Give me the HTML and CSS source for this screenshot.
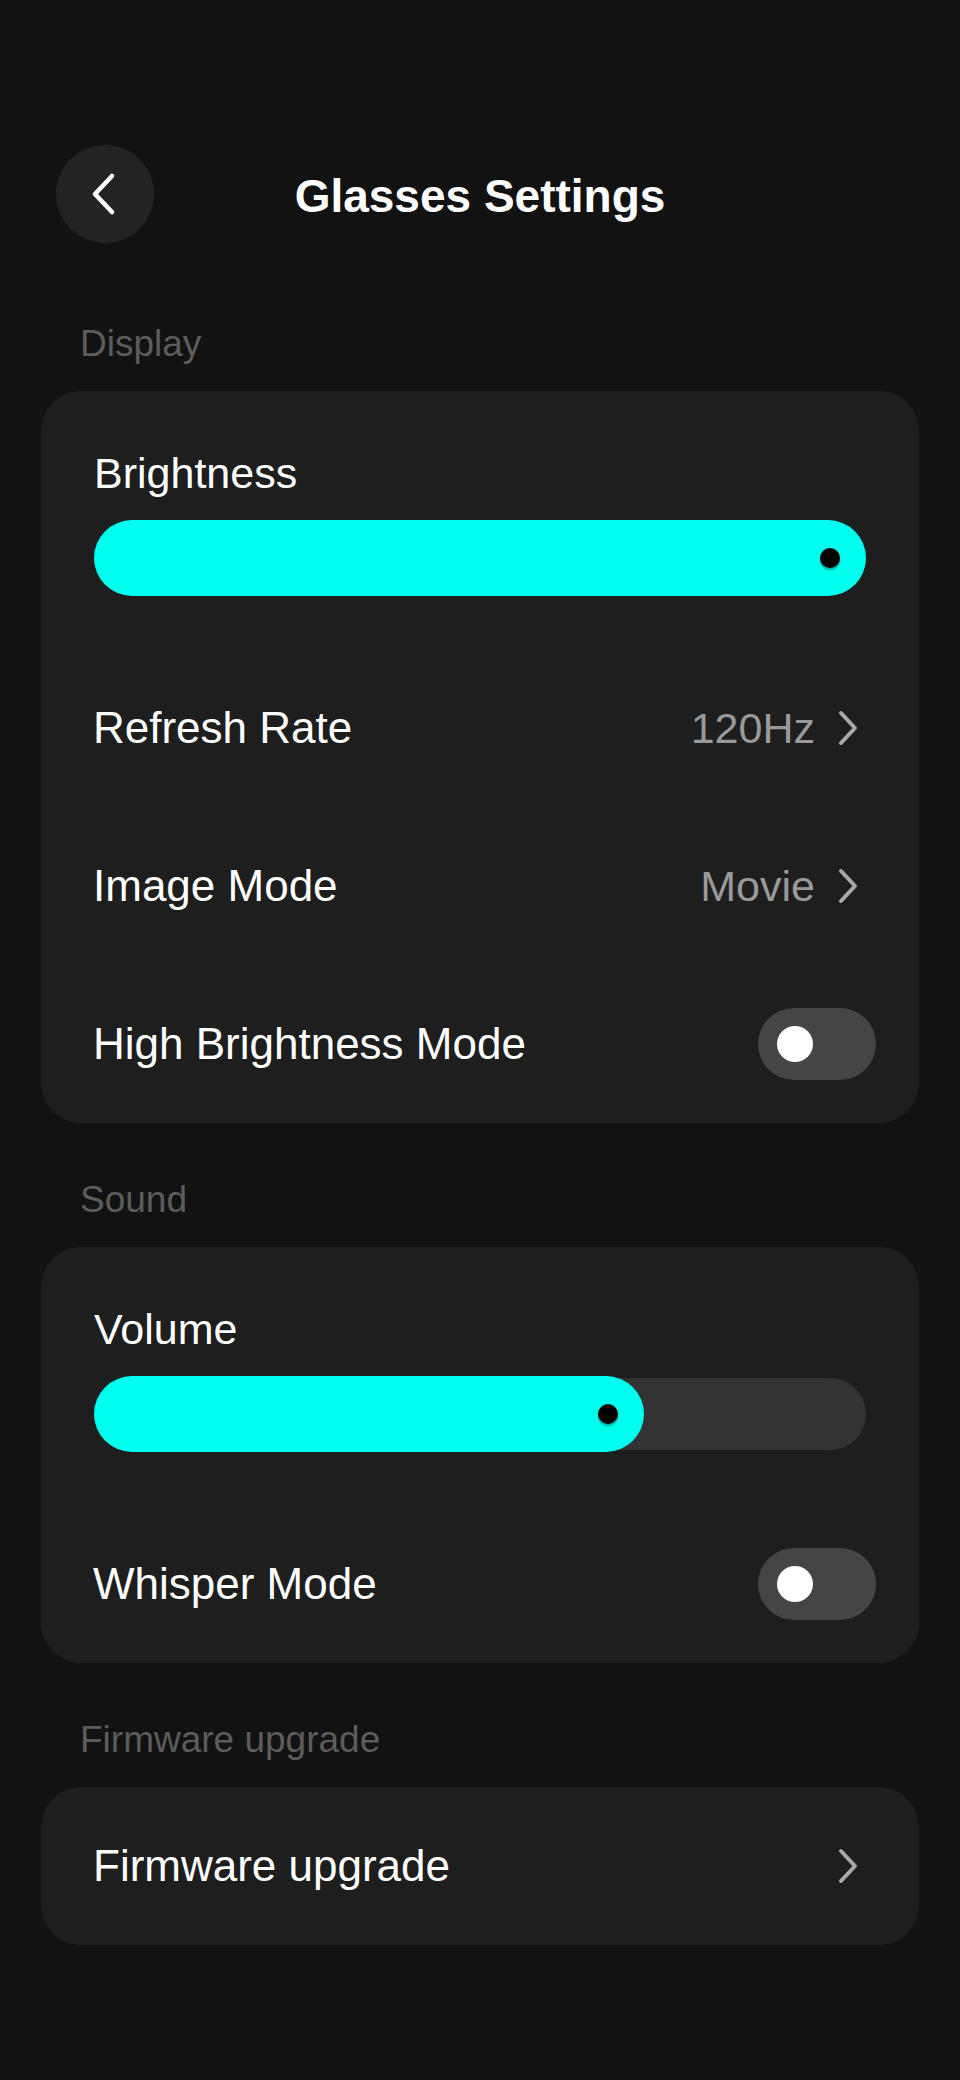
FILE: index.html
```html
<!DOCTYPE html>
<html lang="en">
<head>
    <meta charset="UTF-8">
    <meta name="viewport" content="width=device-width, initial-scale=1.0">
    <title>Glasses Settings</title>
    <link rel="stylesheet" href="styles.css">
</head>
<body>
    <div class="header">
        <button class="back-btn" type="button">
            <svg width="26" height="44" viewBox="0 0 26 44">
                <path d="M22 4 L5 22 L22 40" fill="none" stroke="#fff" stroke-width="4.5" stroke-linecap="round" stroke-linejoin="round"/>
            </svg>
        </button>
        <h1 class="title">Glasses Settings</h1>
        <div></div>
    </div>

    <div class="section-title">Display</div>
    <div class="card">
        <div class="slider-block">
            <div class="slider-label">Brightness</div>
            <div class="slider-track">
                <div class="slider-fill" style="width: 100%;"><span class="dot"></span></div>
            </div>
        </div>
        <div class="row">
            <span class="row-label">Refresh Rate</span>
            <span class="row-value">120Hz</span>
            <svg class="chevron" width="22" height="36" viewBox="0 0 22 36">
                <path d="M4 3 L18 18 L4 33" fill="none" stroke="#a8a8a8" stroke-width="4" stroke-linecap="round" stroke-linejoin="round"/>
            </svg>
        </div>
        <div class="row">
            <span class="row-label">Image Mode</span>
            <span class="row-value">Movie</span>
            <svg class="chevron" width="22" height="36" viewBox="0 0 22 36">
                <path d="M4 3 L18 18 L4 33" fill="none" stroke="#a8a8a8" stroke-width="4" stroke-linecap="round" stroke-linejoin="round"/>
            </svg>
        </div>
        <div class="row">
            <span class="row-label">High Brightness Mode</span>
            <span class="toggle"><span class="knob"></span></span>
        </div>
    </div>

    <div class="section-title">Sound</div>
    <div class="card">
        <div class="slider-block">
            <div class="slider-label">Volume</div>
            <div class="slider-track">
                <div class="slider-fill" style="width: 71.2%;"><span class="dot"></span></div>
            </div>
        </div>
        <div class="row">
            <span class="row-label">Whisper Mode</span>
            <span class="toggle"><span class="knob"></span></span>
        </div>
    </div>

    <div class="section-title">Firmware upgrade</div>
    <div class="card">
        <div class="row">
            <span class="row-label">Firmware upgrade</span>
            <svg class="chevron" width="22" height="36" viewBox="0 0 22 36">
                <path d="M4 3 L18 18 L4 33" fill="none" stroke="#a8a8a8" stroke-width="4" stroke-linecap="round" stroke-linejoin="round"/>
            </svg>
        </div>
    </div>
</body>
</html>
```

FILE: styles.css
```css
html {
    background-color: #121212;
}

body {
    margin: 0;
    min-height: 2080px;
    background-color: #121212;
    color: #fff;
    font-family: "Liberation Sans", Arial, sans-serif;
}

.header{
    display: grid;
    grid-template-columns: 98px 1fr 98px;
    align-items: center;
    height: 98px;
    margin-top: 145px;
    padding: 0 56px;
}

.back-btn{
    width: 98px;
    height: 98px;
    border: none;
    border-radius: 50%;
    background-color: #232323;
    display: flex;
    align-items: center;
    justify-content: center;
    padding: 0 4px 0 0;
    cursor: pointer;
}

.title{
    margin: 0;
    text-align: center;
    font-size: 46px;
    font-weight: bold;
    line-height: 56px;
    padding-top: 4px;
}

.section-title{
    margin: 79px 0 25px;
    padding-left: 80px;
    font-size: 37px;
    line-height: 44px;
    color: #5c5c5c;
}

.card + .section-title{
    margin-top: 55px;
}

.card{
    margin: 0 41px;
    padding: 0 53px;
    background-color: #1e1e1e;
    border-radius: 40px;
}

.slider-block{
    padding: 57px 0 53px;
}

.slider-label{
    font-size: 43px;
    line-height: 50px;
    margin-bottom: 24px;
}

.slider-track{
    height: 72px;
    margin: 2px 0;
    border-radius: 36px;
    background-color: #333;
    display: flex;
    align-items: center;
}

.slider-fill{
    height: 76px;
    border-radius: 38px;
    background-color: #00ffee;
    display: flex;
    align-items: center;
    justify-content: flex-end;
    padding-right: 26px;
    box-sizing: border-box;
}

.dot{
    width: 20px;
    height: 20px;
    border-radius: 50%;
    background-color: #000;
    box-shadow: 0 2px 2px rgba(0, 80, 70, 0.5);
}

.row{
    height: 158px;
    display: flex;
    align-items: center;
}

.row-label{
    flex: 1;
    font-size: 44px;
    margin-left: -1px;
}

.row-value{
    font-size: 43px;
    color: #999;
    margin-right: 22px;
}

.chevron{
    margin-right: 7px;
}

.toggle{
    width: 118px;
    height: 72px;
    margin-right: -10px;
    border-radius: 36px;
    background-color: #454545;
    display: flex;
    align-items: center;
    padding-left: 19px;
    box-sizing: border-box;
}

.knob{
    width: 36px;
    height: 36px;
    border-radius: 50%;
    background-color: #fff;
}
```
